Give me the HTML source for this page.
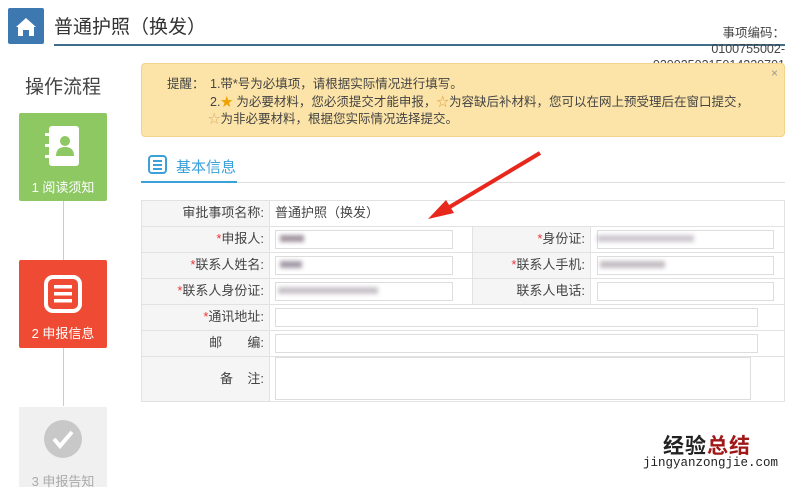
<!DOCTYPE html>
<html><head><meta charset="utf-8"><style>
*{margin:0;padding:0;box-sizing:border-box}
body{width:792px;height:481px;overflow:hidden;background:#fff;font-family:"Liberation Sans","Noto Sans CJK SC",sans-serif;color:#333;position:relative}
.a{position:absolute}
.lab{position:absolute;text-align:right;font-size:13px;color:#444;line-height:26px}
.lab b{color:#e33;font-weight:normal}
.inp{position:absolute;border:1px solid #ddd;height:19px;background:#fff}
.bl{position:absolute;filter:blur(2px);height:7px;opacity:.7}
</style></head><body>
<div class="a" style="left:8px;top:8px;width:36px;height:36px;background:#3d78b0;border-radius:2px">
<svg width="36" height="36" viewBox="0 0 36 36"><path d="M8 19 L18 10 L28 19 L26 19 L26 28 L21 28 L21 22 L15 22 L15 28 L10 28 L10 19 Z" fill="#fff"/></svg></div>
<div class="a" style="left:54px;top:12px;font-size:19px;color:#333">普通护照（换发）</div>
<div class="a" style="left:54px;top:44px;width:731px;height:2px;background:#3e6e8a"></div>
<div class="a" style="left:600px;top:25px;width:185px;text-align:right;font-size:12.5px;color:#444;line-height:16px">事项编码：<br>0100755002-<br>0200250215014220701</div>
<div class="a" style="left:25px;top:72px;font-size:19px;color:#444">操作流程</div>
<div class="a" style="left:19px;top:113px;width:88px;height:88px;background:#8dc863;border-radius:2px;color:#fff;text-align:center">
<svg class="a" style="left:24px;top:12px" width="40" height="42" viewBox="0 0 40 42"><rect x="6" y="1" width="30" height="40" rx="3" fill="#fff"/><rect x="2" y="8" width="7" height="3" fill="#fff"/><rect x="2" y="19" width="7" height="3" fill="#fff"/><rect x="2" y="30" width="7" height="3" fill="#fff"/><circle cx="22" cy="16" r="5" fill="#8dc863"/><path d="M13 31 Q13 22 22 22 Q31 22 31 31 Z" fill="#8dc863"/></svg>
<div class="a" style="left:0;width:88px;top:64px;font-size:13px">1 阅读须知</div></div>
<div class="a" style="left:63px;top:201px;width:1px;height:59px;background:#ccc"></div>
<div class="a" style="left:19px;top:260px;width:88px;height:88px;background:#ef4a33;border-radius:2px;color:#fff;text-align:center">
<svg class="a" style="left:24px;top:14px" width="40" height="40" viewBox="0 0 40 40"><rect x="3" y="3" width="34" height="34" rx="7" fill="none" stroke="#fff" stroke-width="4"/><rect x="11" y="11" width="18" height="3.5" fill="#fff"/><rect x="11" y="18" width="18" height="3.5" fill="#fff"/><rect x="11" y="25" width="18" height="3.5" fill="#fff"/></svg>
<div class="a" style="left:0;width:88px;top:63px;font-size:13px">2 申报信息</div></div>
<div class="a" style="left:63px;top:348px;width:1px;height:58px;background:#ccc"></div>
<div class="a" style="left:19px;top:407px;width:88px;height:80px;background:#f0f0f0;color:#aaa;text-align:center">
<svg class="a" style="left:25px;top:13px" width="38" height="38" viewBox="0 0 38 38"><circle cx="19" cy="19" r="19" fill="#c8c8c8"/><path d="M10 19 L16 26 L28 12" fill="none" stroke="#fff" stroke-width="4"/></svg>
<div class="a" style="left:0;width:88px;top:64px;font-size:13px">3 申报告知</div></div>
<div class="a" style="left:141px;top:63px;width:644px;height:74px;background:#fce4a8;border:1px solid #f2d38a;border-radius:4px;font-size:12.5px;color:#444;line-height:17.5px">
<div class="a" style="left:25px;top:12px">提醒：</div>
<div class="a" style="left:68px;top:12px;white-space:nowrap">1.带*号为必填项，请根据实际情况进行填写。<br>2.<span style="color:#f0a000">★</span> 为必要材料，您必须提交才能申报，<span style="color:#e0a040">☆</span>为容缺后补材料，您可以在网上预受理后在窗口提交，<br><span style="color:#d8b070;margin-left:-2px">☆</span>为非必要材料，根据您实际情况选择提交。</div>
<div class="a" style="right:6px;top:1px;color:#999;font-size:12px">×</div></div>
<svg class="a" style="left:148px;top:155px" width="19" height="19" viewBox="0 0 19 19"><rect x="1" y="1" width="17" height="17" rx="3" fill="none" stroke="#3ba1d9" stroke-width="2"/><rect x="5" y="5" width="9" height="2" fill="#3ba1d9"/><rect x="5" y="9" width="9" height="2" fill="#3ba1d9"/><rect x="5" y="13" width="9" height="2" fill="#3ba1d9"/></svg>
<div class="a" style="left:176px;top:156px;font-size:15px;color:#3ba1d9">基本信息</div>
<div class="a" style="left:141px;top:182px;width:644px;height:1px;background:#ddd"></div>
<div class="a" style="left:141px;top:181px;width:96px;height:2px;background:#3ba1d9"></div>
<div class="a" style="left:141px;top:200px;width:644px;height:202px;border:1px solid #e2e2e2"></div>
<div class="a" style="left:142px;top:201px;width:128px;height:200px;background:#f5f5f5;border-right:1px solid #e2e2e2"></div>
<div class="a" style="left:472px;top:226px;width:119px;height:78px;background:#f5f5f5;border-left:1px solid #e2e2e2;border-right:1px solid #e2e2e2"></div>
<div class="a" style="left:142px;top:226px;width:643px;height:1px;background:#e2e2e2"></div>
<div class="a" style="left:142px;top:252px;width:643px;height:1px;background:#e2e2e2"></div>
<div class="a" style="left:142px;top:278px;width:643px;height:1px;background:#e2e2e2"></div>
<div class="a" style="left:142px;top:304px;width:643px;height:1px;background:#e2e2e2"></div>
<div class="a" style="left:142px;top:330px;width:643px;height:1px;background:#e2e2e2"></div>
<div class="a" style="left:142px;top:356px;width:643px;height:1px;background:#e2e2e2"></div>
<div class="lab" style="left:142px;width:122px;top:200px">审批事项名称:</div>
<div class="a" style="left:275px;top:200px;font-size:13px;line-height:26px;color:#444">普通护照（换发）</div>
<div class="lab" style="left:142px;width:122px;top:226px"><b>*</b>申报人:</div>
<div class="lab" style="left:142px;width:122px;top:252px"><b>*</b>联系人姓名:</div>
<div class="lab" style="left:142px;width:122px;top:278px"><b>*</b>联系人身份证:</div>
<div class="lab" style="left:142px;width:122px;top:304px"><b>*</b>通讯地址:</div>
<div class="lab" style="left:142px;width:122px;top:330px">邮&nbsp;&nbsp;&nbsp;&nbsp;&nbsp;&nbsp;&nbsp;编:</div>
<div class="lab" style="left:142px;width:122px;top:366px">备&nbsp;&nbsp;&nbsp;&nbsp;注:</div>
<div class="lab" style="left:473px;width:112px;top:226px"><b>*</b>身份证:</div>
<div class="lab" style="left:473px;width:112px;top:252px"><b>*</b>联系人手机:</div>
<div class="lab" style="left:473px;width:112px;top:278px">联系人电话:</div>
<div class="inp" style="left:275px;top:230px;width:178px"></div>
<div class="inp" style="left:275px;top:256px;width:178px"></div>
<div class="inp" style="left:275px;top:282px;width:178px"></div>
<div class="inp" style="left:597px;top:230px;width:177px"></div>
<div class="inp" style="left:597px;top:256px;width:177px"></div>
<div class="inp" style="left:597px;top:282px;width:177px"></div>
<div class="inp" style="left:275px;top:308px;width:483px"></div>
<div class="inp" style="left:275px;top:334px;width:483px"></div>
<div class="inp" style="left:275px;top:357px;width:476px;height:43px"></div>
<div class="bl" style="left:280px;top:235px;width:24px;background:#7a6a78"></div>
<div class="bl" style="left:280px;top:261px;width:22px;background:#7a7080"></div>
<div class="bl" style="left:278px;top:287px;width:100px;background:#b0a8b0"></div>
<div class="bl" style="left:597px;top:235px;width:97px;background:#b8b0bc"></div>
<div class="bl" style="left:600px;top:261px;width:65px;background:#a8a0a8"></div>
<svg class="a" style="left:0;top:0" width="792" height="481"><path d="M540 153 L448 208" stroke="#e8271d" stroke-width="4"/><path d="M428 219 L446 200 L454 213 Z" fill="#e8271d"/></svg>
<div class="a" style="left:663px;top:430px;font-size:21px;font-weight:bold;color:#222;letter-spacing:1px">经验<span style="color:#a01818">总结</span></div>
<div class="a" style="left:643px;top:456px;font-size:12.5px;color:#222;font-family:'Liberation Mono',monospace">jingyanzongjie.com</div>
</body></html>
